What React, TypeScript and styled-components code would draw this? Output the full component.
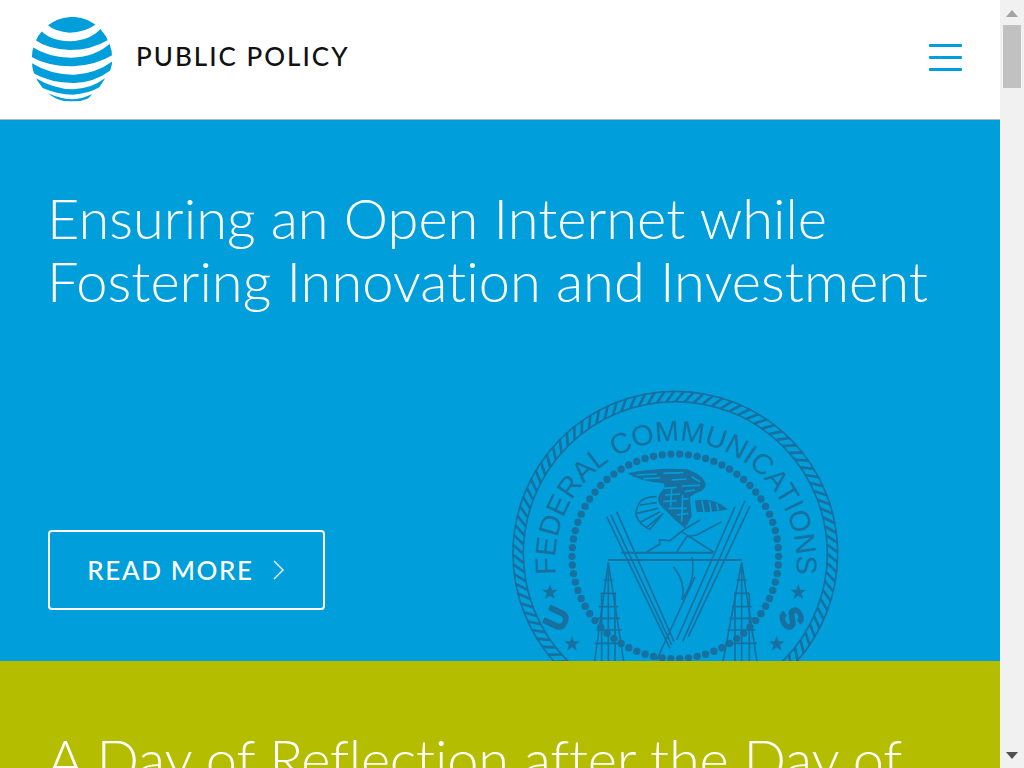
import React from "react";
import styled, { createGlobalStyle } from "styled-components";

const GlobalStyle = createGlobalStyle`
  html, body {
    margin: 0;
    height: 100%;
    overflow: hidden;
    background: #fff;
    font-family: "Lato", "Liberation Sans", sans-serif;
    font-variant-ligatures: none;
  }
`;

const Page = styled.div`
  display: flex;
  width: 1024px;
  height: 768px;
  overflow: hidden;
`;

const Main = styled.main`
  display: flex;
  flex-direction: column;
  width: 1000px;
  height: 768px;
  overflow: hidden;
`;

const Header = styled.header`
  display: flex;
  align-items: flex-start;
  flex: none;
  box-sizing: border-box;
  height: 120px;
  padding: 12px 38px 0 28px;
  background: #fff;
  border-bottom: 1px solid #b8b8b8;
`;

const Brand = styled.div`
  display: flex;
  align-items: center;
  gap: 18px;
  flex: 1;
`;

const BrandName = styled.span`
  margin-bottom: 6px;
  font-size: 26px;
  font-weight: 500;
  letter-spacing: 2px;
  color: #111;
`;

const Burger = styled.div`
  display: flex;
  flex-direction: column;
  gap: 9px;
  width: 33px;
  margin-top: 32px;

  span {
    display: block;
    height: 3px;
    border-radius: 1px;
    background: #009fdb;
  }
`;

const Hero = styled.section`
  position: relative;
  display: flex;
  flex-direction: column;
  justify-content: space-between;
  flex: none;
  box-sizing: border-box;
  height: 541px;
  padding: 66px 48px 51px;
  background: #009fdb;
  overflow: hidden;
`;

const Title = styled.h1`
  position: relative;
  margin: 0 0 0 -1px;
  font-size: 56px;
  font-weight: 300;
  line-height: 63px;
  white-space: nowrap;
  color: #fff;
`;

const ReadMore = styled.a`
  position: relative;
  display: flex;
  align-items: center;
  justify-content: center;
  gap: 18px;
  box-sizing: border-box;
  width: 277px;
  height: 80px;
  border: 2px solid #fff;
  border-radius: 4px;
  font-size: 26px;
  font-weight: 500;
  letter-spacing: 1.6px;
  color: #fff;
`;

const Seal = styled.svg`
  position: absolute;
  left: 500px;
  top: 260px;
  width: 350px;
  height: 290px;
`;

const Band = styled.section`
  flex: 1;
  padding: 66px 48px 0;
  background: #b5bd00;
  overflow: hidden;

  h1 {
    letter-spacing: -0.25px;
  }
`;

const Scrollbar = styled.aside`
  display: flex;
  flex-direction: column;
  align-items: center;
  flex: none;
  width: 24px;
  height: 768px;
  background: #f1f1f1;
`;

const Arrow = styled.div<{ $down?: boolean }>`
  width: 0;
  height: 0;
  border-left: 6px solid transparent;
  border-right: 6px solid transparent;
  ${(p) =>
    p.$down
      ? "margin: auto 0 9px; border-top: 7px solid #505050;"
      : "margin-top: 10px; border-bottom: 7px solid #a3a3a3;"}
`;

const Thumb = styled.div`
  width: 18px;
  height: 63px;
  margin-top: 8px;
  background: #c1c1c1;
`;

const sealInk = "#17709f";

const cx = 526;
const cy = 521;

const rope = Array.from({ length: 104 }, (_, i) => {
  const a = (i / 104) * Math.PI * 2;
  const b = a + 0.055;
  return {
    x1: cx + Math.cos(a) * 456,
    y1: cy + Math.sin(a) * 456,
    x2: cx + Math.cos(b) * 488,
    y2: cy + Math.sin(b) * 488,
  };
});

const dots = Array.from({ length: 74 }, (_, i) => {
  const a = (i / 74) * Math.PI * 2;
  return { x: 526 + Math.cos(a) * 310, y: 529 + Math.sin(a) * 307 };
});

const starPoints = (x: number, y: number, r: number) =>
  Array.from({ length: 10 }, (_, i) => {
    const a = -Math.PI / 2 + (i * Math.PI) / 5;
    const rad = i % 2 === 0 ? r : r * 0.4;
    return `${x + Math.cos(a) * rad},${y + Math.sin(a) * rad}`;
  }).join(" ");

const Logo = () => (
  <svg width="90" height="94" viewBox="0 0 270 282" aria-hidden="true">
    <defs>
      <clipPath id="globe">
        <ellipse cx="132" cy="142" rx="121" ry="128" />
      </clipPath>
    </defs>
    <g clipPath="url(#globe)" fill="#009fdb">
      <path d="M60 40 Q85 16 135 14 Q185 16 205 36 Q170 62 125 62 Q82 60 60 40 Z" />
      <path d="M36 52 Q62 86 125 88 Q190 86 222 46 L240 84 Q190 114 125 114 Q60 112 18 82 Z" />
      <path d="M12 104 Q60 136 130 137 Q205 134 248 92 L256 128 Q205 160 135 163 Q60 164 8 134 Z" />
      <path d="M8 152 Q70 190 140 188 Q205 184 256 146 L246 176 Q200 210 140 213 Q70 214 16 184 Z" />
      <path d="M22 198 Q80 232 135 232 Q190 230 232 198 L214 226 Q180 246 135 248 Q90 248 44 228 Z" />
      <path d="M60 244 Q100 262 135 262 Q165 260 192 246 L175 268 L90 268 Z" />
    </g>
  </svg>
);

const FccSeal = () => (
  <Seal viewBox="0 0 1050 870" aria-hidden="true">
    <defs>
      <path id="sealArc" d="M 231.5 752.6 A 362 362 0 1 1 824.5 752.6" />
    </defs>
    <g fill="none" stroke={sealInk}>
      <circle cx={cx} cy={cy} r="487" strokeWidth="5" />
      <circle cx={cx} cy={cy} r="456" strokeWidth="5" />
      {rope.map((l, i) => (
        <line key={i} {...l} strokeWidth="8" />
      ))}
    </g>
    <text
      fill={sealInk}
      fontFamily="'Liberation Sans', sans-serif"
      fontSize="86"
    >
      <textPath href="#sealArc" startOffset="50%" textAnchor="middle">
        FEDERAL COMMUNICATIONS
      </textPath>
    </text>
    {dots.map((d, i) => (
      <circle key={i} cx={d.x} cy={d.y} r="11" fill={sealInk} />
    ))}
    <polygon points={starPoints(150, 637, 25)} fill={sealInk} />
    <polygon points={starPoints(216, 792, 25)} fill={sealInk} />
    <polygon points={starPoints(895, 637, 25)} fill={sealInk} />
    <polygon points={starPoints(830, 792, 25)} fill={sealInk} />
    <text
      x="170"
      y="747"
      fill={sealInk}
      stroke={sealInk}
      strokeWidth="5"
      fontFamily="'Liberation Sans', sans-serif"
      fontWeight="700"
      fontSize="92"
      textAnchor="middle"
      transform="rotate(-65 170 715)"
    >
      U
    </text>
    <text
      x="876"
      y="747"
      fill={sealInk}
      stroke={sealInk}
      strokeWidth="5"
      fontFamily="'Liberation Sans', sans-serif"
      fontWeight="700"
      fontSize="92"
      textAnchor="middle"
      transform="rotate(65 876 715)"
    >
      S
    </text>

    {/* eagle */}
    <g fill={sealInk}>
      <path d="M382 280 Q470 262 560 268 Q612 285 618 315 Q610 335 590 338 L570 350 L575 410 L555 445 L525 420 L490 385 Q465 365 480 340 Q500 320 490 310 Q420 305 382 280 Z" />
      <path d="M585 362 Q640 350 684 388 Q640 400 590 395 Z" />
    </g>
    <g fill="none" stroke="#009fdb" strokeWidth="5">
      <path d="M410 285 L470 282 M490 280 L550 278 M430 296 L480 294 M515 300 L560 297 M575 290 L600 306" />
      <path d="M490 325 L530 322 M545 318 L600 316 M495 345 L540 342 M555 335 L585 330 M490 365 L530 362 M545 358 L565 356" />
      <path d="M505 385 L560 385 M530 405 L565 400 M515 325 L512 380 M548 345 L545 425" />
      <path d="M606 362 L612 396 M628 364 L634 396 M650 370 L655 392" />
    </g>
    <path
      d="M470 350 Q425 350 415 375 Q405 395 410 410 Q420 435 450 448 L490 400 M470 368 L420 375 M475 385 L410 400 M480 395 L422 426 M488 402 L440 442"
      fill="none"
      stroke={sealInk}
      strokeWidth="5"
    />

    <g fill="none" stroke={sealInk} strokeWidth="5">
      {/* lightning */}
      <path d="M440 516 L480 492 L478 480 L510 482 L550 450 L600 420" />
      <path d="M530 516 L560 470 L590 465 L665 425" />
      <path d="M545 455 L640 516" />
      {/* scales */}
      <path d="M364 518 L640 518 M325 540 L725 540" strokeWidth="6" />
      <path d="M320 410 L510 805 M350 395 L522 785 M332 404 L515 795" />
      <path d="M705 380 L530 780 M735 362 L548 785 M750 378 L565 770 M470 840 L585 590" />
      <path d="M520 560 Q560 610 545 660 M575 530 Q590 600 545 660" />
      {/* towers */}
      <path d="M325 548 L283 850 M325 548 L372 850 M725 548 L668 850 M725 548 L772 850" />
      <path d="M325 548 L325 850 M725 548 L725 850 M305 640 L305 850 M345 640 L345 850 M705 640 L705 850 M748 640 L748 850" />
      <path d="M310 600 L340 600 M302 640 L348 640 M296 680 L354 680 M292 715 L360 715 M288 750 L365 750 M284 790 L368 790" />
      <path d="M710 600 L740 600 M702 640 L748 640 M695 680 L755 680 M688 715 L760 715 M682 750 L766 750 M676 790 L770 790" />
    </g>
  </Seal>
);

export default function App() {
  return (
    <Page>
      <GlobalStyle />
      <Main>
        <Header>
          <Brand>
            <Logo />
            <BrandName>PUBLIC POLICY</BrandName>
          </Brand>
          <Burger>
            <span />
            <span />
            <span />
          </Burger>
        </Header>
        <Hero>
          <FccSeal />
          <Title>
            Ensuring an Open Internet while
            <br />
            Fostering Innovation and Investment
          </Title>
          <ReadMore>
            READ MORE
            <svg width="14" height="20" viewBox="0 0 14 20" fill="none" stroke="#fff" strokeWidth="1.4">
              <path d="M2 1 L11 10 L2 19" />
            </svg>
          </ReadMore>
        </Hero>
        <Band>
          <Title>A Day of Reflection after the Day of</Title>
        </Band>
      </Main>
      <Scrollbar>
        <Arrow />
        <Thumb />
        <Arrow $down />
      </Scrollbar>
    </Page>
  );
}
